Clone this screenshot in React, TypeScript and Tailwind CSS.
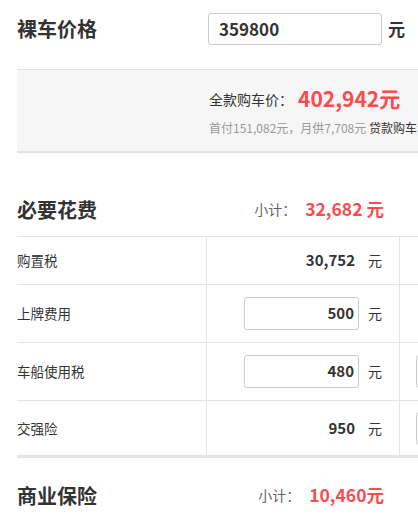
import React from 'react';

const red = 'text-[#fd4a4f]';

const SectionHead: React.FC<{ title: string; total: string; className?: string }> = ({ title, total, className }) => (
  <div className={`flex items-center justify-between w-[367px] h-[50px] pb-[3px] ${className ?? ''}`}>
    <h2 className="text-[20px] font-bold text-[#333]">{title}</h2>
    <div className="flex items-center">
      <span className="text-[14px] text-[#666]">小计：</span>
      <span className={`ml-[9px] text-[17.5px] font-bold ${red}`}>{total}</span>
    </div>
  </div>
);

const NumBox: React.FC<{ value: string }> = ({ value }) => (
  <div className="w-[115px] h-[33px] border border-[#ccc] rounded-[3px] flex items-center justify-end pr-[4px] text-[15px] font-bold text-[#333] bg-white">
    {value}
  </div>
);

const fees = [
  { name: '购置税', value: '30,752', input: false, extra: false, h: 'h-[47px]' },
  { name: '上牌费用', value: '500', input: true, extra: false, h: 'h-[58px]' },
  { name: '车船使用税', value: '480', input: true, extra: true, h: 'h-[58px]' },
  { name: '交强险', value: '950', input: false, extra: true, h: 'h-[55px]' },
];

export default function App() {
  return (
    <div className="w-[418px] h-[520px] overflow-hidden bg-white text-[#333] font-['Noto_Sans_CJK_SC','Noto_Sans',sans-serif]">
      <div className="w-[640px] pl-[17px] pt-[13px]">
        {/* 裸车价格 */}
        <div className="flex items-center">
          <h2 className="w-[191px] text-[20px] font-bold">裸车价格</h2>
          <div className="w-[174px] h-[32px] border border-[#ccc] rounded-[3px] flex items-center pl-[10px] text-[17px] font-bold">
            359800
          </div>
          <span className="ml-[6px] text-[17px] font-bold">元</span>
        </div>

        {/* 全款 */}
        <div className="mt-[24px] h-[84px] bg-[#f6f6f6] border-t border-[#e2e2e2] border-b-2 border-b-[#e2e2e2] pl-[192px] pt-[14px]">
          <div className="flex items-center h-[30px]">
            <span className="text-[14px]">全款购车价：</span>
            <span className={`ml-[5px] text-[21px] font-bold ${red}`}>402,942元</span>
          </div>
          <div className="mt-[5px] text-[12px] text-[#999] whitespace-nowrap">
            首付151,082元，月供7,708元 <span className="text-[#333]">贷款购车计算</span>
          </div>
        </div>

        {/* 必要花费 */}
        <SectionHead title="必要花费" total="32,682 元" className="mt-[33px]" />
        <div className="border-t border-[#e5e5e5] border-b-[3px] border-b-[#e5e5e5]">
          {fees.map((f, i) => (
            <div
              key={f.name}
              className={`grid grid-cols-[190px_193px_1fr] ${f.h} ${i > 0 ? 'border-t border-[#e5e5e5]' : ''}`}
            >
              <div className="flex items-center text-[13.5px] border-r border-[#e5e5e5]">{f.name}</div>
              <div className="flex items-center justify-end pr-[17px] border-r border-[#e5e5e5]">
                {f.input ? (
                  <NumBox value={f.value} />
                ) : (
                  <span className="pr-[4px] text-[15px] font-bold">{f.value}</span>
                )}
                <span className="ml-[9px] text-[14px]">元</span>
              </div>
              <div className="flex items-center pl-[16px]">
                {f.extra && <div className="w-[120px] h-[33px] border border-[#ccc] rounded-[3px]" />}
              </div>
            </div>
          ))}
        </div>

        {/* 商业保险 */}
        <SectionHead title="商业保险" total="10,460元" className="mt-[14px]" />
      </div>
    </div>
  );
}
